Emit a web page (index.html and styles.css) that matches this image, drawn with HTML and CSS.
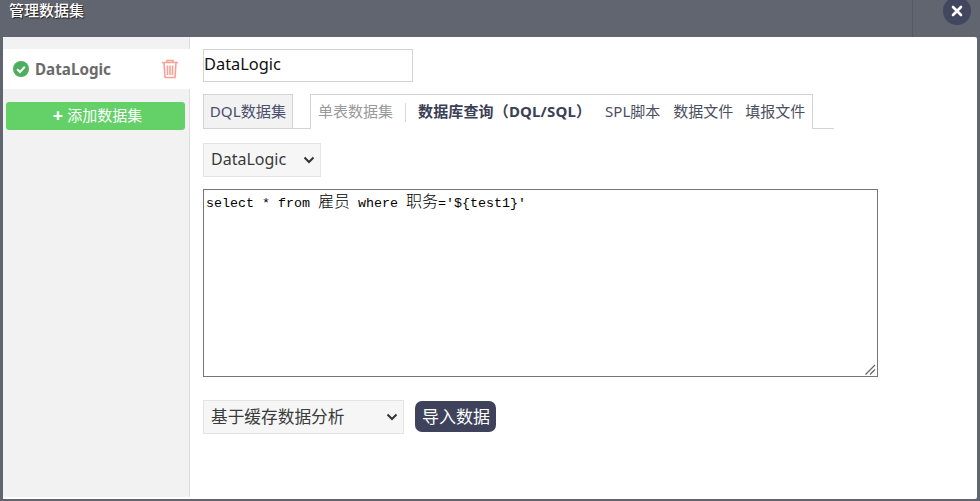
FILE: index.html
```html
<!DOCTYPE html>
<html lang="zh-CN">
<head>
<meta charset="utf-8">
<title>管理数据集</title>
<link rel="stylesheet" href="styles.css">
</head>
<body>
<div class="dialog">
  <header class="titlebar">
    <span class="title">管理数据集</span>
    <span class="divider"></span>
    <button class="close" aria-label="关闭">
      <svg width="12" height="12" viewBox="0 0 12 12"><path d="M2 2 L10 10 M10 2 L2 10" stroke="#fff" stroke-width="2.6" stroke-linecap="round"/></svg>
    </button>
  </header>
  <div class="content">
    <aside class="sidebar">
      <div class="ds-item">
        <svg class="ds-check" width="16" height="16" viewBox="0 0 16 16"><circle cx="8" cy="8" r="8" fill="#4caf5f"/><path d="M4.2 8.2 L7 11 L11.8 5.8" fill="none" stroke="#fff" stroke-width="2"/></svg>
        <span class="ds-name">DataLogic</span>
        <svg class="ds-del" width="18" height="20" viewBox="0 0 18 20"><path d="M6 3 V1.5 H12 V3 M1 3.5 H17 M3 3.5 L4 18.5 H14 L15 3.5 M6.5 6.5 V16 M9 6.5 V16 M11.5 6.5 V16" fill="none" stroke="#f7a295" stroke-width="1.6"/></svg>
      </div>
      <button class="add-btn"><span class="plus">+</span><span class="add-label">添加数据集</span></button>
    </aside>
    <main class="main">
      <input class="name-input" type="text" value="DataLogic">
      <div class="tabs">
        <div class="tab-type">DQL数据集</div>
        <div class="tab-gap"></div>
        <div class="tab-panel">
          <span class="tab tab-muted">单表数据集</span>
          <span class="tab-sep"></span>
          <span class="tab tab-active">数据库查询（DQL/SQL）</span>
          <span class="tab tab-spl">SPL脚本</span>
          <span class="tab">数据文件</span>
          <span class="tab">填报文件</span>
        </div>
        <div class="tab-tail"></div>
      </div>
      <select class="select select-ds"><option>DataLogic</option></select>
      <div class="sql-wrap">
        <div class="sql" role="textbox" contenteditable="true" spellcheck="false">select * from <span class="cjk">雇员</span> where <span class="cjk">职务</span>='${test1}'</div>
        <svg class="grip" width="11" height="11" viewBox="0 0 11 11"><path d="M0.5 10.5 L10 1 M5 10.5 L10 5.5" stroke="#666" stroke-width="1.2" fill="none"/></svg>
      </div>
      <div class="bottom">
        <select class="select select-mode"><option>基于缓存数据分析</option></select>
        <button class="import">导入数据</button>
      </div>
    </main>
  </div>
</div>
</body>
</html>
```
FILE: styles.css
```css
* { box-sizing: border-box; }
html, body { margin: 0; height: 100%; overflow: hidden; }
body { font-family: "Noto Sans", "Noto Sans CJK SC", sans-serif; color: #3b4056; }
.dialog { width: 980px; height: 501px; background: #61656f; padding: 0 3px 2px; display: flex; flex-direction: column; }
.titlebar { height: 37px; flex: none; position: relative; display: flex; }
.title { font-size: 15px; line-height: 21px; color: #fff; font-weight: 500; margin-left: 6px; text-shadow: 1px 1px 1px #222; }
.divider { position: absolute; left: 909px; top: 0; width: 1px; height: 37px; background: #555966; }
.close { position: absolute; left: 940px; top: -3px; width: 28px; height: 28px; border: 0; border-radius: 50%; background: #42465e; padding: 0; display: flex; align-items: center; justify-content: center; }
.content { flex: 1; background: #fff; display: flex; min-height: 0; border-radius: 0 2px 2px 0; }
.sidebar { width: 187px; flex: none; background: #f2f2f2; border-right: 1px solid #ddd; padding-top: 12px; margin-bottom: 2px; }
.ds-item { height: 40px; background: #fff; display: flex; align-items: center; padding-left: 10px; margin-right: -1px; }
.ds-name { font-size: 15.2px; font-weight: 700; color: #6a6a6a; margin-left: 6px; flex: 1; }
.ds-check { flex: none; }
.ds-del { flex: none; margin-right: 11px; }
.add-btn { display: flex; align-items: center; justify-content: center; width: 179px; height: 28px; margin: 13px 0 0 3px; border: 0; border-radius: 3px; background: #63d168; color: #fff; font: 15px/26px "Noto Sans", "Noto Sans CJK SC", sans-serif; padding: 0 0 2px 4px; }
.plus { font-weight: 700; font-size: 18px; margin-right: 4px; }
.main { flex: 1; padding: 12px 0 0 13px; display: flex; flex-direction: column; align-items: flex-start; }
.name-input { width: 210px; height: 33px; border: 1px solid #d3d3d3; padding: 0 0 4px; font: 16.4px "Noto Sans", "Noto Sans CJK SC", sans-serif; color: #111; outline: 0; }
.tabs { display: flex; align-items: flex-end; margin-top: 12px; height: 35px; }
.tab-type { width: 90px; height: 35px; background: #f2f2f2; border: 1px solid #d3d3d3; font-size: 15.2px; line-height: 32px; text-align: center; color: #4a4f6a; white-space: nowrap; }
.tab-gap { width: 17px; height: 1px; background: #d3d3d3; }
.tab-panel { height: 35px; width: 503px; border: 1px solid #d3d3d3; border-bottom: 0; display: flex; align-items: center; padding: 0 0 3px 7px; font-size: 15px; white-space: nowrap; }
.tab { flex: none; margin-right: 12px; color: #4b4e60; }
.tab-muted { color: #999; }
.tab-sep { flex: none; width: 1px; height: 19px; background: #d8d8d8; margin: 3px 12px 0 0; }
.tab-active { font-weight: 700; color: #3b4056; margin-right: 14px; letter-spacing: 0.15px; }
.tab-spl { margin-right: 13px; }
.tab-tail { width: 21px; height: 1px; background: #d3d3d3; }
.select { appearance: none; font: 16px "Noto Sans", "Noto Sans CJK SC", sans-serif; color: #3a3a3a; border: 1px solid #e4e4e4; padding: 0 0 2px 7px; height: 34px; outline: 0; background: #f6f6f6 url("data:image/svg+xml,%3Csvg xmlns='http://www.w3.org/2000/svg' width='12' height='8'%3E%3Cpath d='M1.5 1.5 L6 6 L10.5 1.5' fill='none' stroke='%23333' stroke-width='2'/%3E%3C/svg%3E") no-repeat right 5px center; }
.select-ds { width: 118px; margin-top: 14px; }
.sql-wrap { position: relative; margin-top: 12px; }
.sql { width: 675px; height: 188px; border: 1px solid #767676; font: 13.33px/16px "Liberation Mono", "Noto Sans CJK SC", monospace; padding: 2px 2px 2px; color: #000; outline: 0; white-space: pre; overflow: auto; }
.cjk { font-size: 16px; font-family: "Noto Sans CJK SC", sans-serif; line-height: 16px; font-weight: 300; }
.grip { position: absolute; right: 2px; bottom: 2px; }
.bottom { display: flex; align-items: flex-start; margin-top: 23px; }
.select-mode { width: 201px; font-size: 16.7px; }
.import { margin: 1px 0 0 11px; width: 81px; height: 31px; border: 0; border-radius: 7px; background: #3e425a; color: #fff; font: 17px/29px "Noto Sans", "Noto Sans CJK SC", sans-serif; padding: 0 0 1px 1px; white-space: nowrap; }
```
